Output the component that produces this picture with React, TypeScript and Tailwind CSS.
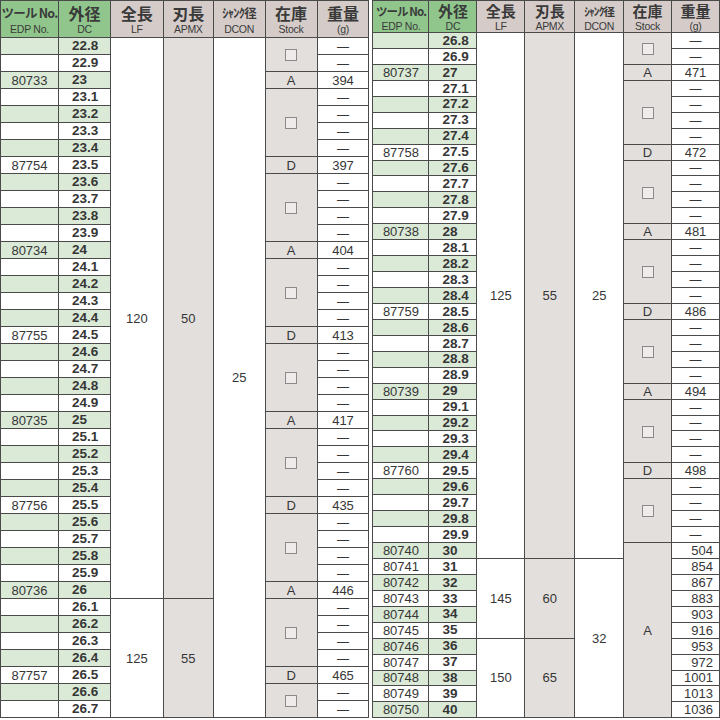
import React from 'react';

type Span = [string, number];
type Row = {
  dc: string;
  edp?: string;
  w?: string;
  lf?: Span;
  apmx?: Span;
  dcon?: Span;
  stock?: Span;
  right?: boolean;
};

const range = (from: number, to: number) => {
  const out: string[] = [];
  for (let i = Math.round(from * 10); i <= Math.round(to * 10); i++) {
    out.push(i % 10 === 0 ? String(i / 10) : (i / 10).toFixed(1));
  }
  return out;
};

function buildRows(
  dcs: string[],
  edp: Record<string, string>,
  weights: Record<string, string>,
  spans: { lf: Record<number, Span>; apmx: Record<number, Span>; dcon: Record<number, Span> },
  fixedStock: Record<number, Span> = {},
  stockUntil = dcs.length
): Row[] {
  const rows: Row[] = dcs.map((dc, i) => ({
    dc,
    edp: edp[dc],
    w: weights[dc],
    lf: spans.lf[i],
    apmx: spans.apmx[i],
    dcon: spans.dcon[i],
  }));
  // stock groups: keyed row = A (x.0) / D (x.5), blanks merge in between
  let i = 0;
  while (i < stockUntil) {
    if (rows[i].edp) {
      rows[i].stock = [rows[i].dc.endsWith('.5') ? 'D' : 'A', 1];
      i++;
    } else {
      let j = i;
      while (j < stockUntil && !rows[j].edp) j++;
      rows[i].stock = ['□', j - i];
      i = j;
    }
  }
  Object.entries(fixedStock).forEach(([k, v]) => (rows[Number(k)].stock = v));
  return rows;
}

const leftRows = buildRows(
  range(22.8, 26.7),
  { '23': '80733', '23.5': '87754', '24': '80734', '24.5': '87755', '25': '80735', '25.5': '87756', '26': '80736', '26.5': '87757' },
  { '23': '394', '23.5': '397', '24': '404', '24.5': '413', '25': '417', '25.5': '435', '26': '446', '26.5': '465' },
  {
    lf: { 0: ['120', 33], 33: ['125', 7] },
    apmx: { 0: ['50', 33], 33: ['55', 7] },
    dcon: { 0: ['25', 40] },
  }
);

const rightDcs = [...range(26.8, 29.9), '30', '31', '32', '33', '34', '35', '36', '37', '38', '39', '40'];
const rightEdp: Record<string, string> = { '27': '80737', '27.5': '87758', '28': '80738', '28.5': '87759', '29': '80739', '29.5': '87760' };
const rightW: Record<string, string> = { '27': '471', '27.5': '472', '28': '481', '28.5': '486', '29': '494', '29.5': '498' };
const heavy = ['504', '854', '867', '883', '903', '916', '953', '972', '1001', '1013', '1036'];
heavy.forEach((w, k) => {
  rightEdp[String(30 + k)] = String(80740 + k);
  rightW[String(30 + k)] = w;
});

const rightRows = buildRows(
  rightDcs,
  rightEdp,
  rightW,
  {
    lf: { 0: ['125', 33], 33: ['145', 5], 38: ['150', 5] },
    apmx: { 0: ['55', 33], 33: ['60', 5], 38: ['65', 5] },
    dcon: { 0: ['25', 33], 33: ['32', 10] },
  },
  { 32: ['A', 11] },
  32
).map((r, i) => ({ ...r, right: i >= 32 }));

const cell = 'border border-[#4a4a4a] p-0 leading-none';
const jp = { fontFamily: '"Noto Sans CJK JP", "Liberation Sans", sans-serif' };

const heads = [
  ['ツール No.', 'EDP No.', true, true],
  ['外径', 'DC', true, false],
  ['全長', 'LF', false, false],
  ['刃長', 'APMX', false, false],
  ['ｼｬﾝｸ径', 'DCON', false, true],
  ['在庫', 'Stock', false, false],
  ['重量', '(g)', false, false],
] as const;

function Header({ h, small }: { h: string; small: boolean }) {
  return (
    <tr className={h}>
      {heads.map(([ja, en, green, narrow]) => (
        <th
          key={en}
          className={`${cell} font-normal text-[#3a3a3a] ${green ? 'bg-[#90c68c]' : 'bg-[#d5ccc9]'}`}
        >
          <div className="flex flex-col items-center">
            <span
              className={`font-semibold whitespace-nowrap ${small ? 'leading-[18px]' : 'leading-[20px]'} ${
                narrow
                  ? small
                    ? 'text-[11.5px] tracking-[-0.08em]'
                    : 'text-[12.5px] tracking-[-0.06em]'
                  : small
                    ? 'text-[15px]'
                    : 'text-[16px]'
              }`}
              style={jp}
            >
              {ja}
            </span>
            <span className="text-[10.5px] leading-[12px] tracking-tight whitespace-nowrap">{en}</span>
          </div>
        </th>
      ))}
    </tr>
  );
}

function Table({
  rows,
  widths,
  headH,
  rowH,
  small,
}: {
  rows: Row[];
  widths: string[];
  headH: string;
  rowH: string;
  small: boolean;
}) {
  return (
    <table className="table-fixed border-collapse text-[#363636] text-[13px]" style={{ fontFamily: '"Liberation Sans", Arial, sans-serif' }}>
      <colgroup>
        {widths.map((w, i) => (
          <col key={i} className={w} />
        ))}
      </colgroup>
      <thead>
        <Header h={headH} small={small} />
      </thead>
      <tbody>
        {rows.map((r, i) => {
          const green = i % 2 === 0 ? 'bg-[#dbead6]' : 'bg-white';
          return (
            <tr key={r.dc} className={rowH}>
              <td className={`${cell} ${green} text-center`}>{r.edp ?? ''}</td>
              <td className={`${cell} ${green} text-left pl-[13px] font-bold text-[13.5px]`}>{r.dc}</td>
              {r.lf && (
                <td rowSpan={r.lf[1]} className={`${cell} bg-white text-center`}>
                  {r.lf[0]}
                </td>
              )}
              {r.apmx && (
                <td rowSpan={r.apmx[1]} className={`${cell} bg-[#e3dfdd] text-center`}>
                  {r.apmx[0]}
                </td>
              )}
              {r.dcon && (
                <td rowSpan={r.dcon[1]} className={`${cell} bg-white text-center`}>
                  {r.dcon[0]}
                </td>
              )}
              {r.stock && (
                <td rowSpan={r.stock[1]} className={`${cell} bg-[#e3dfdd] text-center`}>
                  {r.stock[0] === '□' ? (
                    <span className="inline-block w-[12px] h-[12px] border border-[#8a8a8a] bg-[#efebea] align-middle" />
                  ) : (
                    r.stock[0]
                  )}
                </td>
              )}
              <td className={`${cell} bg-white ${r.right ? 'text-right pr-[6px]' : 'text-center'}`}>
                {r.w ?? <span className="text-[12px]">—</span>}
              </td>
            </tr>
          );
        })}
      </tbody>
    </table>
  );
}

export default function App() {
  return (
    <div className="w-[720px] h-[720px] bg-white overflow-hidden flex items-start gap-[3px]">
      <Table
        rows={leftRows}
        widths={['w-[58px]', 'w-[52px]', 'w-[53px]', 'w-[50px]', 'w-[52px]', 'w-[52px]', 'w-[52px]']}
        headH="h-[37px]"
        rowH="h-[17px]"
        small={false}
      />
      <Table
        rows={rightRows}
        widths={['w-[56px]', 'w-[48px]', 'w-[48px]', 'w-[50px]', 'w-[49px]', 'w-[48px]', 'w-[48px]']}
        headH="h-[32px]"
        rowH="h-[15.95px]"
        small={true}
      />
    </div>
  );
}
